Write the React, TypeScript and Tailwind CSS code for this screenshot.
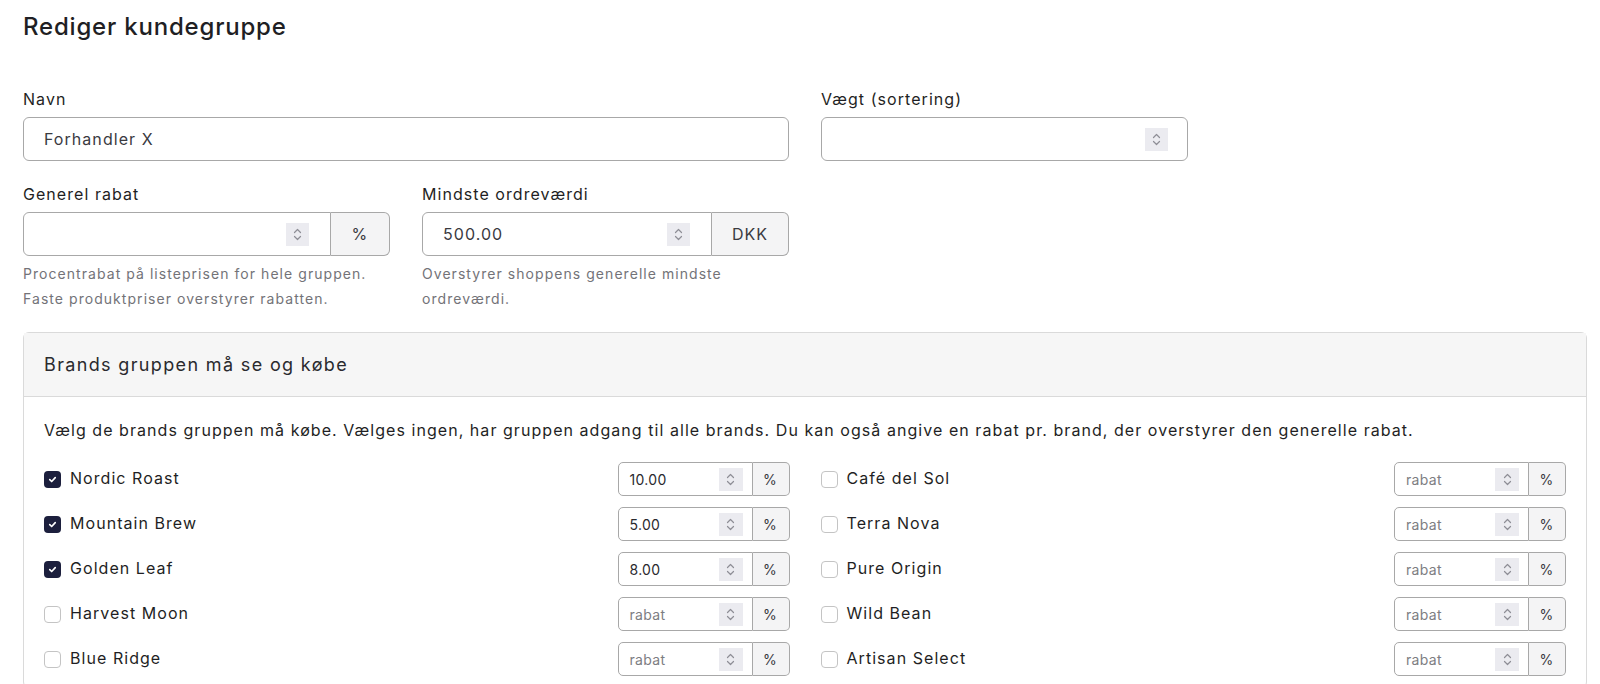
import React from "react";

type Brand = { name: string; checked: boolean; value: string };

const left: Brand[] = [
  { name: "Nordic Roast", checked: true, value: "10.00" },
  { name: "Mountain Brew", checked: true, value: "5.00" },
  { name: "Golden Leaf", checked: true, value: "8.00" },
  { name: "Harvest Moon", checked: false, value: "" },
  { name: "Blue Ridge", checked: false, value: "" },
];

const right: Brand[] = [
  { name: "Café del Sol", checked: false, value: "" },
  { name: "Terra Nova", checked: false, value: "" },
  { name: "Pure Origin", checked: false, value: "" },
  { name: "Wild Bean", checked: false, value: "" },
  { name: "Artisan Select", checked: false, value: "" },
];

function Spin({ w = 23 }: { w?: number }) {
  return (
    <span className="flex h-[23px] shrink-0 items-center justify-center bg-[#ebebf0]" style={{ width: w }}>
      <svg width="23" height="23" viewBox="0 0 23 23" fill="none" stroke="#8e8e96" strokeWidth="1.2" strokeLinecap="round" strokeLinejoin="round">
        <path d="M8.5 9.5 11.5 6.5 14.5 9.5" />
        <path d="M8.5 13.5 11.5 16.5 14.5 13.5" />
      </svg>
    </span>
  );
}

function Checkbox({ checked }: { checked: boolean }) {
  if (checked) {
    return (
      <span className="flex h-[17px] w-[17px] shrink-0 items-center justify-center rounded-[4px] bg-[#1c1f3d]">
        <svg width="11" height="11" viewBox="0 0 12 12" fill="none" stroke="#fff" strokeWidth="1.8" strokeLinecap="round" strokeLinejoin="round">
          <path d="M3 6.2 5.1 8.2 9 4" />
        </svg>
      </span>
    );
  }
  return <span className="h-[17px] w-[17px] shrink-0 rounded-[4px] border border-[#c4c4c4] bg-white" />;
}

function BrandRow({ b }: { b: Brand }) {
  return (
    <div className="mb-[11px] flex h-[34px] items-center justify-between">
      <div className="flex items-center gap-[9px] text-[16px] text-[#1f1f24]">
        <Checkbox checked={b.checked} />
        <span className="-mt-[2px]">{b.name}</span>
      </div>
      <div className="flex h-[34px] w-[172px]">
        <div className="flex flex-1 items-center rounded-l-[5px] border border-[#a8a8a8] pl-[11px] pr-[9px] text-[14px] tracking-[0.3px]">
          {b.value ? (
            <span className="flex-1 text-[#2a2a2e]">{b.value}</span>
          ) : (
            <span className="flex-1 text-[#7d7d82]">rabat</span>
          )}
          <Spin w={24} />
        </div>
        <div className="flex w-[37px] items-center justify-center rounded-r-[5px] border border-l-0 border-[#a8a8a8] bg-[#f4f4f5] text-[14px] text-[#3a3a3f]">
          %
        </div>
      </div>
    </div>
  );
}

export default function App() {
  return (
    <div className="min-h-[684px] bg-white font-[Inter,'Noto_Sans',sans-serif] tracking-[1.05px] text-[#1f1f24]">
      <div className="ml-[23px] w-[1564px] pt-[11px]">
        <h1 className="mb-[44px] text-[24px] leading-[32px] font-medium tracking-[0.8px] text-[#1f1f24]">Rediger kundegruppe</h1>

        <div className="grid grid-cols-4 gap-x-[32px]">
          <div className="col-span-2">
            <div className="mb-[6px] text-[16px] leading-[24px]">Navn</div>
            <div className="flex h-[44px] items-center rounded-[6px] border border-[#a8a8a8] px-[20px] text-[16px] text-[#3a3a3f]">
              Forhandler X
            </div>
          </div>
          <div>
            <div className="mb-[6px] text-[16px] leading-[24px]">Vægt (sortering)</div>
            <div className="flex h-[44px] items-center justify-end rounded-[6px] border border-[#a8a8a8] pr-[19px]">
              <Spin />
            </div>
          </div>
        </div>

        <div className="mt-[21px] grid grid-cols-4 gap-x-[32px]">
          <div>
            <div className="mb-[6px] text-[16px] leading-[24px]">Generel rabat</div>
            <div className="flex h-[44px]">
              <div className="flex flex-1 items-center justify-end rounded-l-[6px] border border-[#a8a8a8] pr-[21px]">
                <Spin />
              </div>
              <div className="flex w-[59px] items-center justify-center rounded-r-[6px] border border-l-0 border-[#a8a8a8] bg-[#f4f4f5] text-[16px] text-[#3a3a3f]">
                %
              </div>
            </div>
            <p className="mt-[6px] text-[14px] leading-[24.5px] text-[#737378]">
              Procentrabat på listeprisen for hele gruppen. Faste produktpriser overstyrer rabatten.
            </p>
          </div>
          <div>
            <div className="mb-[6px] text-[16px] leading-[24px]">Mindste ordreværdi</div>
            <div className="flex h-[44px]">
              <div className="flex flex-1 items-center rounded-l-[6px] border border-[#a8a8a8] pl-[20px] pr-[21px] text-[16px] text-[#3a3a3f]">
                <span className="flex-1">500.00</span>
                <Spin />
              </div>
              <div className="flex w-[77px] items-center justify-center rounded-r-[6px] border border-l-0 border-[#a8a8a8] bg-[#f4f4f5] text-[16px] text-[#3a3a3f]">
                DKK
              </div>
            </div>
            <p className="mt-[6px] text-[14px] leading-[24.5px] text-[#737378]">
              Overstyrer shoppens generelle mindste ordreværdi.
            </p>
          </div>
        </div>

        <div className="mt-[21px] rounded-[6px] border border-[#dadada]">
          <div className="flex h-[64px] items-center border-b border-[#dadada] bg-[#f6f6f6] px-[20px] text-[18px] tracking-[1.35px] text-[#2a2a2e]">
            Brands gruppen må se og købe
          </div>
          <div className="px-[20px] pt-[21px]">
            <p className="mb-[20px] text-[16px] leading-[24px] text-[#1f1f24]">
              Vælg de brands gruppen må købe. Vælges ingen, har gruppen adgang til alle brands. Du kan også angive en rabat pr. brand, der overstyrer den generelle rabat.
            </p>
            <div className="grid grid-cols-2 gap-x-[31px]">
              <div>
                {left.map((b) => (
                  <BrandRow key={b.name} b={b} />
                ))}
              </div>
              <div>
                {right.map((b) => (
                  <BrandRow key={b.name} b={b} />
                ))}
              </div>
            </div>
          </div>
        </div>
      </div>
    </div>
  );
}
